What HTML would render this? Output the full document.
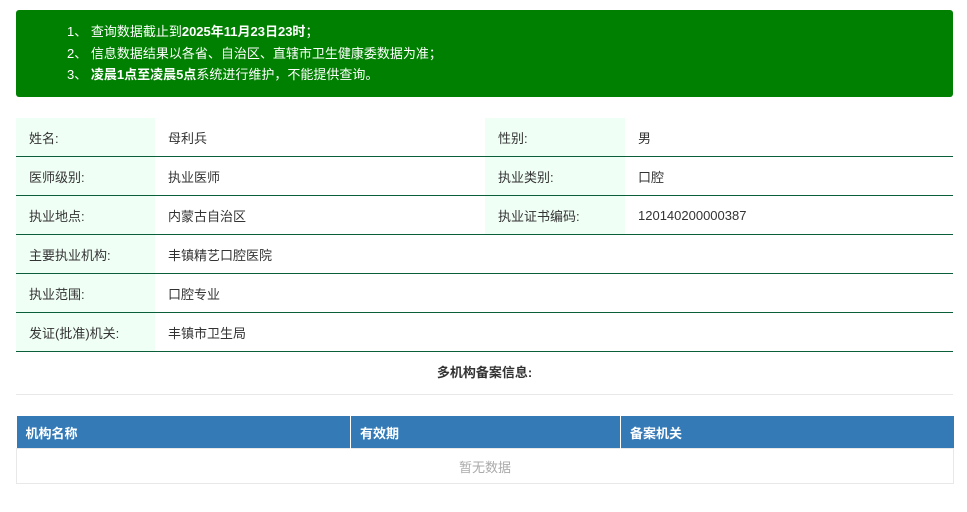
<!DOCTYPE html>
<html><head><meta charset="utf-8"><style>
body{margin:0;background:#fff;font-family:"Liberation Sans","Noto Sans CJK SC",sans-serif;font-size:13px;color:#333;width:967px;height:512px;overflow:hidden;position:relative}
.note{position:absolute;left:16px;top:10px;width:937px;height:87px;background:#008000;border-radius:3px;color:#fff;font-size:13px;box-sizing:border-box;padding:11px 0 0 51px;line-height:21.5px}
.note b{font-weight:bold}
table{table-layout:fixed}
table.info{position:absolute;left:16px;top:118px;width:937px;border-collapse:collapse}
table.info td{height:38px;border-bottom:1px solid #0b5e3a;padding:0;font-size:13px;vertical-align:middle}
td.l{background:#f0fff6;padding-left:13px !important}
td.v{padding-left:13px !important}
.title{position:absolute;left:16px;top:352px;width:937px;height:42px;line-height:42px;text-align:center;font-weight:bold;border-bottom:1px solid #e8e8e8}
table.org{position:absolute;left:16px;top:416px;width:937px;border-collapse:collapse}
table.org th{background:#337ab7;color:#fff;text-align:left;height:32px;padding:0 0 0 9px;font-weight:bold;border-left:1px solid #fff}
table.org th:first-child{border-left:none}
table.org td{height:32px;border:1px solid #e8e8e8;text-align:center;color:#aaa}
</style></head><body>
<div class="note">
<div>1、 查询数据截止到<b>2025年11月23日23时</b>；</div>
<div>2、 信息数据结果以各省、自治区、直辖市卫生健康委数据为准；</div>
<div>3、 <b>凌晨1点至凌晨5点</b>系统进行维护，不能提供查询。</div>
</div>
<table class="info">
<colgroup><col style="width:139px"><col style="width:330px"><col style="width:140px"><col style="width:328px"></colgroup>
<tr><td class="l">姓名:</td><td class="v">母利兵</td><td class="l">性别:</td><td class="v">男</td></tr>
<tr><td class="l">医师级别:</td><td class="v">执业医师</td><td class="l">执业类别:</td><td class="v">口腔</td></tr>
<tr><td class="l">执业地点:</td><td class="v">内蒙古自治区</td><td class="l">执业证书编码:</td><td class="v">120140200000387</td></tr>
<tr><td class="l">主要执业机构:</td><td class="v">丰镇精艺口腔医院</td><td></td><td></td></tr>
<tr><td class="l">执业范围:</td><td class="v">口腔专业</td><td></td><td></td></tr>
<tr><td class="l">发证(批准)机关:</td><td class="v">丰镇市卫生局</td><td></td><td></td></tr>
</table>
<div class="title">多机构备案信息:</div>
<table class="org">
<colgroup><col style="width:334px"><col style="width:270px"><col style="width:333px"></colgroup>
<tr><th>机构名称</th><th>有效期</th><th>备案机关</th></tr>
<tr><td colspan="3">暂无数据</td></tr>
</table>
</body></html>
